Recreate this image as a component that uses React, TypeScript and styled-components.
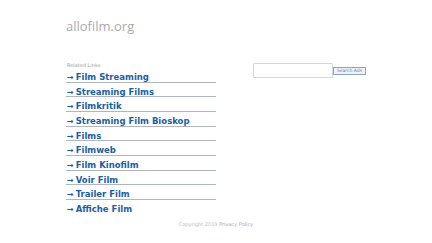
import styled, { createGlobalStyle } from 'styled-components'

const Global = createGlobalStyle`
  html, body {
    margin: 0;
    padding: 0;
    background: #ffffff;
  }
`
const Page = styled.div`
  width: 300px;
  margin: 0 auto;
  padding-top: 16px;
  font-family: 'DejaVu Sans', sans-serif;
`
const Title = styled.div`
  font-family: 'Open Sans', sans-serif;
  font-size: 13px;
  color: #ababab;
  height: 20px;
  line-height: 20px;
`
const Main = styled.div`
  display: flex;
  margin-top: 27px;
`
const Left = styled.div`
  width: 150px;
`
const Right = styled.div`
  margin-left: 37px;
  display: flex;
  align-items: flex-start;
`
const Related = styled.div`
  font-size: 5px;
  color: #9aa0a8;
  height: 5px;
  line-height: 5px;
  margin-left: 1px;
`
const List = styled.ul`
  list-style: none;
  margin: 0;
  padding: 0;
`
const Item = styled.li`
  height: 13.67px;
  line-height: 13.67px;
  border-bottom: 1px solid #aeb6c4;
  padding-left: 1px;
  &:last-child {
    border-bottom: none;
  }
`
const ItemLink = styled.a`
  font-weight: bold;
  font-size: 8.5px;
  color: #1c5ea4;
  text-decoration: none;
  white-space: nowrap;
`
const Arrow = styled.span`
  font-size: 8px;
  margin-right: 2px;
`
const SearchInput = styled.input`
  box-sizing: border-box;
  width: 80px;
  height: 15px;
  border: 1px solid #d6d6d6;
  border-radius: 1px;
  margin: 0;
  padding: 0;
`
const SearchButton = styled.button`
  box-sizing: border-box;
  margin: 4px 0 0 0;
  padding: 0 2px;
  height: 7.5px;
  width: 33px;
  font-size: 4.5px;
  line-height: 5px;
  font-family: 'DejaVu Sans', sans-serif;
  color: #6f82a0;
  background: #eef2f8;
  border: 1px solid #8aa4c4;
`
const Footer = styled.div`
  margin-top: 7px;
  text-align: center;
  font-size: 5px;
  color: #bdbdbd;
  a {
    color: #a8a8a8;
    text-decoration: underline;
  }
`

const links = [
  'Film Streaming',
  'Streaming Films',
  'Filmkritik',
  'Streaming Film Bioskop',
  'Films',
  'Filmweb',
  'Film Kinofilm',
  'Voir Film',
  'Trailer Film',
  'Affiche Film',
]

export default function App() {
  return (
    <>
      <Global />
      <Page>
        <Title>allofilm.org</Title>
        <Main>
          <Left>
            <Related>Related Links</Related>
            <List>
              {links.map((l, i) => (
                <Item key={i}>
                  <ItemLink href='#'>
                    <Arrow>→</Arrow>
                    {l}
                  </ItemLink>
                </Item>
              ))}
            </List>
          </Left>
          <Right>
            <SearchInput type='text' />
            <SearchButton>Search Ads</SearchButton>
          </Right>
        </Main>
        <Footer>
          Copyright 2019 <a href='#'>Privacy Policy</a>
        </Footer>
      </Page>
    </>
  )
}
